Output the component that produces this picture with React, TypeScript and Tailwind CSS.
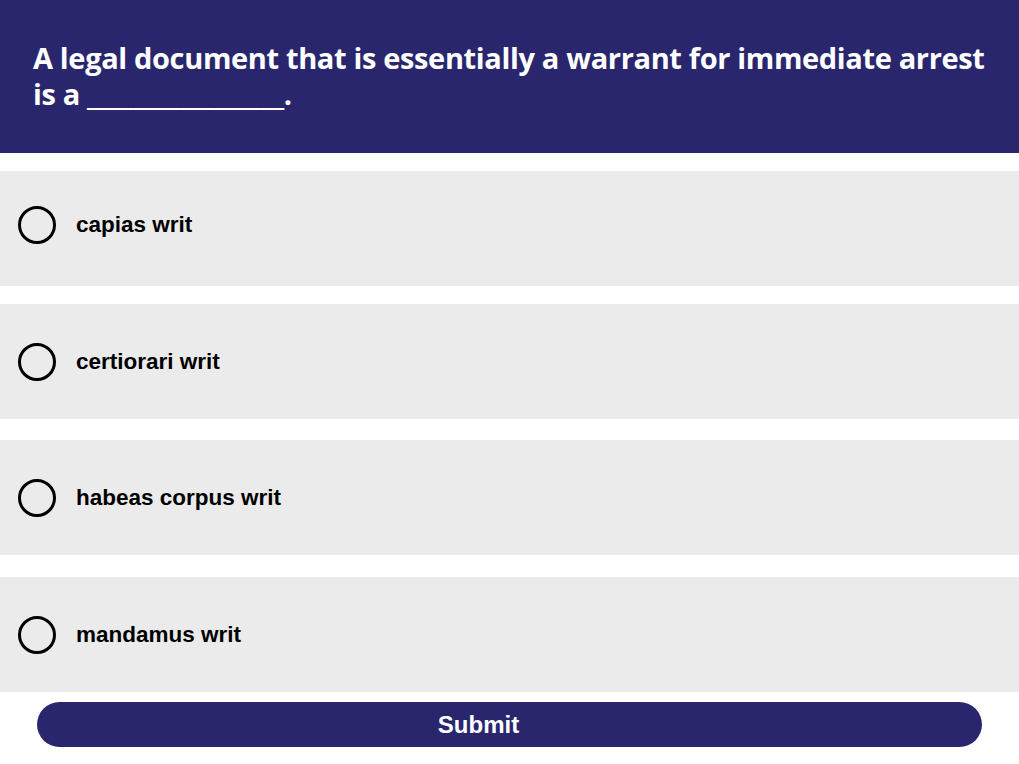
const options = [
    { id: 1, label: 'capias writ', mt: 'mt-[18px]', pb: 'pb-[8px]' },
    { id: 2, label: 'certiorari writ', mt: 'mt-[18px]', pb: 'pb-[0px]' },
    { id: 3, label: 'habeas corpus writ', mt: 'mt-[21px]', pb: 'pb-[0px]' },
    { id: 4, label: 'mandamus writ', mt: 'mt-[22px]', pb: 'pb-[0px]' },
]

const App = () => {
    return (
        <div className="flex h-[764px] w-[1019px] flex-col bg-white">
            <div className="h-[153px] bg-[#29266e] px-[33px] pt-[40px]">
                <h1 className="whitespace-nowrap font-['Open_Sans',sans-serif] text-[29px] font-bold leading-[36px] tracking-[-0.35px] text-white">
                    A legal document that is essentially a warrant for immediate arrest
                    <br />
                    is a _________________.
                </h1>
            </div>
            {options.map((option) => (
                <label
                    key={option.id}
                    className={`${option.mt} ${option.pb} flex h-[115px] cursor-pointer items-center bg-[#ebebeb] pl-[18px]`}
                >
                    <span className="h-[38px] w-[38px] shrink-0 rounded-full border-[3px] border-black" />
                    <span className="ml-[20px] font-['Liberation_Sans',Arial,sans-serif] text-[22.5px] font-bold text-black">
                        {option.label}
                    </span>
                </label>
            ))}
            <div className="mt-[10px] px-[37px]">
                <button className="flex h-[45px] w-full items-center justify-center rounded-full bg-[#29266e] pr-[62px] font-['Liberation_Sans',Arial,sans-serif] text-[24px] font-bold text-white">
                    Submit
                </button>
            </div>
        </div>
    )
}

export default App
